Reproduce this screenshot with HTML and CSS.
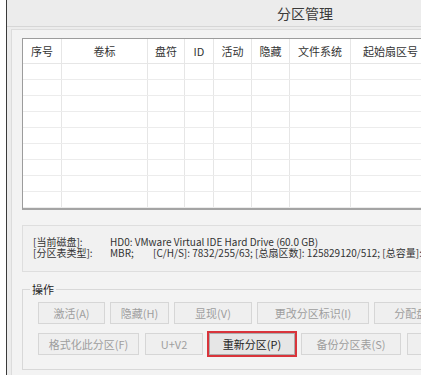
FILE: index.html
```html
<!DOCTYPE html>
<html lang="zh-CN">
<head>
<meta charset="utf-8">
<title>分区管理</title>
<link rel="stylesheet" href="styles.css">
</head>
<body>
<div class="window">
  <div class="titlebar">分区管理</div>
  <div class="page">
    <div class="grid">
      <div class="row head">
        <div class="cell">序号</div><div class="cell">卷标</div><div class="cell">盘符</div><div class="cell">ID</div><div class="cell">活动</div><div class="cell">隐藏</div><div class="cell">文件系统</div><div class="cell">起始扇区号</div><div class="cell">总扇区数</div>
      </div>
      <div class="row"><div class="cell"></div><div class="cell"></div><div class="cell"></div><div class="cell"></div><div class="cell"></div><div class="cell"></div><div class="cell"></div><div class="cell"></div><div class="cell"></div></div>
      <div class="row"><div class="cell"></div><div class="cell"></div><div class="cell"></div><div class="cell"></div><div class="cell"></div><div class="cell"></div><div class="cell"></div><div class="cell"></div><div class="cell"></div></div>
      <div class="row"><div class="cell"></div><div class="cell"></div><div class="cell"></div><div class="cell"></div><div class="cell"></div><div class="cell"></div><div class="cell"></div><div class="cell"></div><div class="cell"></div></div>
      <div class="row"><div class="cell"></div><div class="cell"></div><div class="cell"></div><div class="cell"></div><div class="cell"></div><div class="cell"></div><div class="cell"></div><div class="cell"></div><div class="cell"></div></div>
      <div class="row"><div class="cell"></div><div class="cell"></div><div class="cell"></div><div class="cell"></div><div class="cell"></div><div class="cell"></div><div class="cell"></div><div class="cell"></div><div class="cell"></div></div>
      <div class="row"><div class="cell"></div><div class="cell"></div><div class="cell"></div><div class="cell"></div><div class="cell"></div><div class="cell"></div><div class="cell"></div><div class="cell"></div><div class="cell"></div></div>
      <div class="row"><div class="cell"></div><div class="cell"></div><div class="cell"></div><div class="cell"></div><div class="cell"></div><div class="cell"></div><div class="cell"></div><div class="cell"></div><div class="cell"></div></div>
      <div class="row"><div class="cell"></div><div class="cell"></div><div class="cell"></div><div class="cell"></div><div class="cell"></div><div class="cell"></div><div class="cell"></div><div class="cell"></div><div class="cell"></div></div>
      <div class="row"><div class="cell"></div><div class="cell"></div><div class="cell"></div><div class="cell"></div><div class="cell"></div><div class="cell"></div><div class="cell"></div><div class="cell"></div><div class="cell"></div></div>
    </div>

    <div class="info">
      <div class="line"><span class="key">[当前磁盘]:</span><span>HD0: VMware Virtual IDE Hard Drive (60.0 GB)</span></div>
      <div class="line"><span class="key">[分区表类型]:</span><span class="mbr">MBR;</span><span>[C/H/S]: 7832/255/63; [总扇区数]: 125829120/512; [总容量]: 60.0GB</span></div>
    </div>

    <fieldset class="ops">
      <legend>操作</legend>
      <div class="btns row1">
        <button class="btn w67" disabled>激活(A)</button>
        <button class="btn w59" disabled>隐藏(H)</button>
        <button class="btn w78" disabled>显现(V)</button>
        <button class="btn w112" disabled>更改分区标识(I)</button>
        <button class="btn w98" disabled>分配盘符(L)</button>
      </div>
      <div class="btns row2">
        <button class="btn w101" disabled>格式化此分区(F)</button>
        <button class="btn w58" disabled>U+V2</button>
        <button class="btn w86 active">重新分区(P)</button>
        <button class="btn w100" disabled>备份分区表(S)</button>
        <button class="btn w100" disabled>删除分区(D)</button>
      </div>
    </fieldset>
  </div>
</div>
</body>
</html>
```

FILE: styles.css
```css
html, body {
  margin: 0;
  padding: 0;
  overflow: hidden;
  background: #ffffff;
}

body {
  width: 421px;
  height: 375px;
  font-family: "Noto Sans CJK SC", "Noto Sans", sans-serif;
  color: #333;
}

.window {
  margin-left: 6px;
  width: 700px;
  height: 375px;
  border-left: 1px solid #3a3a3a;
  background: #ececec;
  display: flex;
  flex-direction: column;
}

.titlebar {
  height: 26px;
  border-bottom: 1px solid #d6d6d6;
  padding-left: 270px;
  font-size: 14px;
  line-height: 27px;
  color: #3a3a3a;
}

.page {
  flex: 1;
  margin: 2px 0 0 4px;
  border-left: 1px solid #dcdcdc;
  border-top: 1px solid #dcdcdc;
  background: #f3f3f3;
  padding: 8px 0 0 10px;
}

/* partition grid */
.grid {
  background: #fff;
  border-top: 1px solid #9c9c9c;
  border-left: 1px solid #9c9c9c;
  border-bottom: 2px solid #a4a4a4;
}

.row {
  display: grid;
  grid-template-columns: 39px 86px 37px 29px 38px 38px 61px 80px 100px;
  height: 16px;
  box-sizing: border-box;
  border-bottom: 1px solid #ececec;
}

.row.head {
  height: 25px;
  border-bottom: 1px solid #e6e6e6;
}

.cell {
  box-sizing: border-box;
  border-right: 1px solid #e6e6e6;
  font-size: 11px;
  line-height: 24px;
  text-align: center;
  color: #333;
  white-space: nowrap;
}

/* disk info */
.info {
  margin-top: 15px;
  border: 1px solid #dedede;
  background: #f1f1f1;
  padding: 10px 0 0 10px;
  box-sizing: border-box;
  height: 47px;
  font-size: 10px;
  line-height: 11px;
  color: #333;
}

.line {
  white-space: nowrap;
  height: 11px;
}

.key {
  display: inline-block;
  width: 77px;
}

.mbr {
  display: inline-block;
  width: 43px;
}

/* operations */
.ops {
  margin: 11px 0 0 0;
  padding: 7px 0 14px 15px;
  border: 1px solid #d8d8d8;
  min-width: 0;
}

.ops legend {
  margin-left: -8px;
  padding: 0 2px;
  font-size: 11px;
  line-height: 12px;
  color: #222;
}

.btns {
  display: flex;
  height: 22px;
}

.row1 {
  gap: 5px;
}

.row2 {
  gap: 6px;
  margin-top: 9px;
}

.btn {
  flex: none;
  height: 22px;
  padding: 0;
  border: 1px solid #d6d6d6;
  background: #efefef;
  font-family: "Noto Sans CJK SC", "Noto Sans", sans-serif;
  font-size: 11px;
  color: #9e9e9e;
  white-space: nowrap;
  overflow: hidden;
}

.btn.active {
  color: #1f1f1f;
  background: #e6e6e6;
  border-color: #acacac;
  outline: 2px solid #d9343b;
  outline-offset: 0;
}

.w58 { width: 58px; }
.w59 { width: 59px; }
.w67 { width: 67px; }
.w78 { width: 78px; }
.w86 { width: 86px; }
.w98 { width: 98px; }
.w100 { width: 100px; }
.w101 { width: 101px; }
.w112 { width: 112px; }
```
